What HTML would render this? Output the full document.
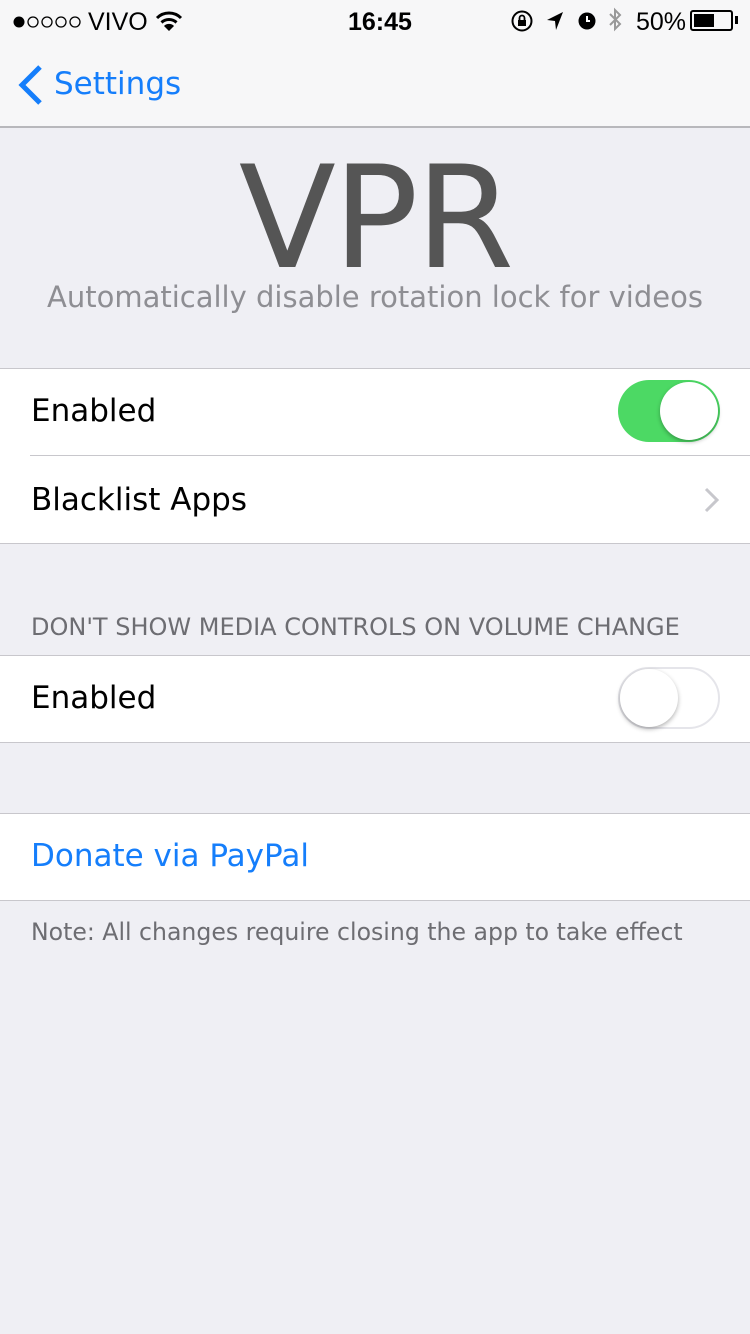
<!DOCTYPE html>
<html><head><meta charset="utf-8"><style>
*{margin:0;padding:0;box-sizing:border-box}
body{width:750px;height:1334px;background:#efeff4;font-family:"DejaVu Sans","Liberation Sans",sans-serif;position:relative;overflow:hidden;color:#000}
.abs{position:absolute}
.nav{left:0;top:0;width:750px;height:128px;background:#f7f7f8;border-bottom:2px solid #b8b8bc}
.cell{position:absolute;left:0;width:750px;background:#fff}
.line{position:absolute;height:1px;background:#c8c7cc}
.t{position:absolute;font-size:31px;white-space:nowrap}
</style></head><body>
<div class="abs nav"></div>
<svg class="abs" style="left:12px;top:14px" width="72" height="16"><circle cx="7" cy="8" r="5.5" fill="#000"/><g fill="none" stroke="#000" stroke-width="1.3"><circle cx="21" cy="8" r="5"/><circle cx="35" cy="8" r="5"/><circle cx="49" cy="8" r="5"/><circle cx="63" cy="8" r="5"/></g></svg>
<div class="abs" style="left:88px;top:8px;font-size:25px;font-family:'Liberation Sans',sans-serif">VIVO</div>
<svg class="abs" style="left:155px;top:10px" width="28" height="22" viewBox="0 0 28 22"><path d="M2 8 A17 17 0 0 1 26 8" stroke="#000" stroke-width="3" fill="none"/><path d="M6.5 12.5 A11 11 0 0 1 21.5 12.5" stroke="#000" stroke-width="3" fill="none"/><path d="M14 21 L9 16 A7 7 0 0 1 19 16 Z" fill="#000"/></svg>
<div class="abs" style="left:348px;top:8px;font-size:25px;font-weight:bold;font-family:'Liberation Sans',sans-serif">16:45</div>
<svg class="abs" style="left:510px;top:9px" width="24" height="24"><circle cx="12" cy="12" r="9.5" stroke="#000" stroke-width="2" fill="none"/><rect x="8" y="11" width="8" height="6" fill="#000"/><path d="M9.5 11V9a2.5 2.5 0 0 1 5 0v2" stroke="#000" stroke-width="1.8" fill="none"/></svg>
<svg class="abs" style="left:545px;top:10px" width="20" height="22"><path d="M18 2 L2 10 L10 11 L11 20 Z" fill="#000"/></svg>
<svg class="abs" style="left:576px;top:8px" width="22" height="24"><circle cx="11" cy="13" r="8.5" fill="#000"/><path d="M11 8v5h3" stroke="#fff" stroke-width="2" fill="none"/></svg>
<svg class="abs" style="left:607px;top:6px" width="16" height="28"><path d="M3 8 L13 18 L8 23 V4 L13 9 L3 19" stroke="#999" stroke-width="2" fill="none"/></svg>
<div class="abs" style="left:636px;top:8px;font-size:25px;font-family:'Liberation Sans',sans-serif">50%</div>
<div class="abs" style="left:690px;top:10px;width:43px;height:21px;border:2px solid #000;border-radius:3px"><div style="position:absolute;left:2px;top:2px;width:20px;height:13px;background:#000"></div></div>
<div class="abs" style="left:735px;top:16px;width:3px;height:8px;background:#000"></div>
<svg class="abs" style="left:16px;top:64px" width="28" height="42"><path d="M24 3 L6 21 L24 39" stroke="#157efb" stroke-width="5" fill="none"/></svg>
<div class="t" style="left:54px;top:66px;color:#157efb;font-size:31px">Settings</div>
<div class="t" style="left:0;width:750px;text-align:center;top:136px;font-size:142px;color:#555;letter-spacing:-3px">VPR</div>
<div class="t" style="left:0;width:750px;text-align:center;top:280px;font-size:29px;color:#8e8e93">Automatically disable rotation lock for videos</div>
<div class="cell" style="top:368px;height:176px"></div>
<div class="line" style="left:0;width:750px;top:368px"></div>
<div class="line" style="left:30px;width:720px;top:455px"></div>
<div class="line" style="left:0;width:750px;top:543px"></div>
<div class="t" style="left:31px;top:393px">Enabled</div>
<div class="abs" style="left:618px;top:380px;width:102px;height:62px;border-radius:31px;background:#4cd964"><div style="position:absolute;right:2px;top:2px;width:58px;height:58px;border-radius:50%;background:#fff;box-shadow:0 2px 4px rgba(0,0,0,.3)"></div></div>
<div class="t" style="left:31px;top:482px">Blacklist Apps</div>
<svg class="abs" style="left:703px;top:486px" width="18" height="28"><path d="M3 3 L14 14 L3 25" stroke="#c7c7cc" stroke-width="3" fill="none"/></svg>
<div class="t" style="left:31px;top:613px;font-size:24px;color:#6d6d72">DON'T SHOW MEDIA CONTROLS ON VOLUME CHANGE</div>
<div class="cell" style="top:655px;height:88px"></div>
<div class="line" style="left:0;width:750px;top:655px"></div>
<div class="line" style="left:0;width:750px;top:742px"></div>
<div class="t" style="left:31px;top:680px">Enabled</div>
<div class="abs" style="left:618px;top:667px;width:102px;height:62px;border-radius:31px;background:#fff;border:2px solid #e5e5ea"><div style="position:absolute;left:0;top:0;width:58px;height:58px;border-radius:50%;background:#fff;box-shadow:0 2px 5px rgba(0,0,0,.3)"></div></div>
<div class="cell" style="top:813px;height:88px"></div>
<div class="line" style="left:0;width:750px;top:813px"></div>
<div class="line" style="left:0;width:750px;top:900px"></div>
<div class="t" style="left:31px;top:838px;color:#157efb">Donate via PayPal</div>
<div class="t" style="left:31px;top:918px;font-size:23.6px;color:#6d6d72">Note: All changes require closing the app to take effect</div>
</body></html>
